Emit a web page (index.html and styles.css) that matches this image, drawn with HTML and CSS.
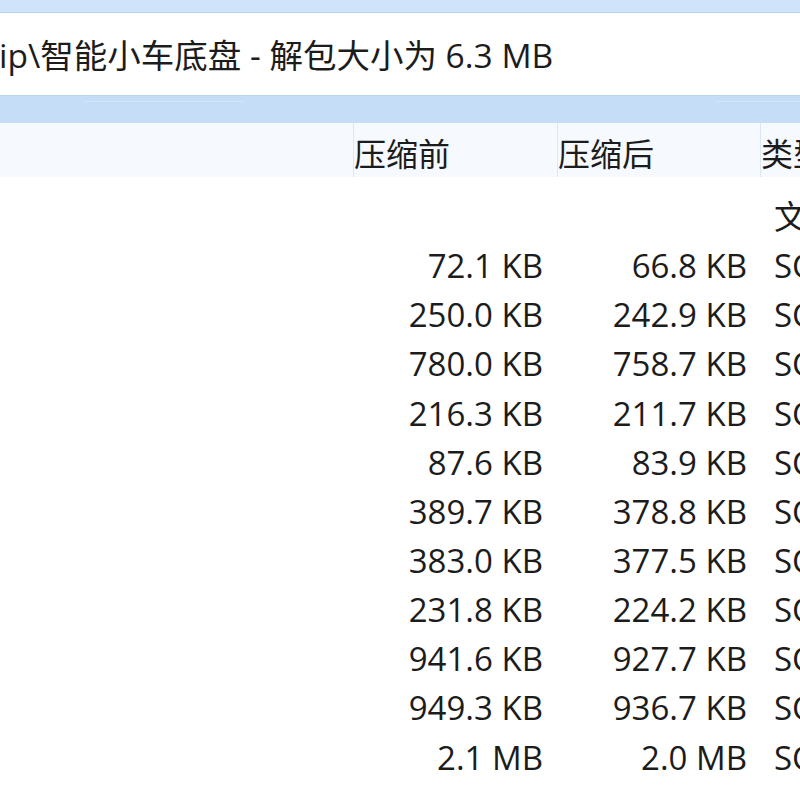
FILE: index.html
```html
<!DOCTYPE html>
<html lang="zh-CN">
<head>
<meta charset="utf-8">
<title>智能小车底盘</title>
<link rel="stylesheet" href="styles.css">
</head>
<body>
<div class="window">
  <div class="strip"></div>
  <div class="title">ip\智能小车底盘 - 解包大小为 6.3 MB</div>
  <div class="toolbar">
    <span class="glint glint-a"></span>
    <span class="glint glint-b"></span>
  </div>
  <div class="list">
    <div class="head grid">
      <div class="hcell"></div>
      <div class="hcell sep">压缩前</div>
      <div class="hcell sep">压缩后</div>
      <div class="hcell sep">类型</div>
    </div>
    <div class="rows">
      <div class="row grid"><div></div><div class="num"></div><div class="num"></div><div class="type">文件夹</div></div>
      <div class="row grid"><div></div><div class="num">72.1 KB</div><div class="num">66.8 KB</div><div class="type">SCHDOC 文件</div></div>
      <div class="row grid"><div></div><div class="num">250.0 KB</div><div class="num">242.9 KB</div><div class="type">SCHDOC 文件</div></div>
      <div class="row grid"><div></div><div class="num">780.0 KB</div><div class="num">758.7 KB</div><div class="type">SCHDOC 文件</div></div>
      <div class="row grid"><div></div><div class="num">216.3 KB</div><div class="num">211.7 KB</div><div class="type">SCHDOC 文件</div></div>
      <div class="row grid"><div></div><div class="num">87.6 KB</div><div class="num">83.9 KB</div><div class="type">SCHDOC 文件</div></div>
      <div class="row grid"><div></div><div class="num">389.7 KB</div><div class="num">378.8 KB</div><div class="type">SCHDOC 文件</div></div>
      <div class="row grid"><div></div><div class="num">383.0 KB</div><div class="num">377.5 KB</div><div class="type">SCHDOC 文件</div></div>
      <div class="row grid"><div></div><div class="num">231.8 KB</div><div class="num">224.2 KB</div><div class="type">SCHDOC 文件</div></div>
      <div class="row grid"><div></div><div class="num">941.6 KB</div><div class="num">927.7 KB</div><div class="type">SCHDOC 文件</div></div>
      <div class="row grid"><div></div><div class="num">949.3 KB</div><div class="num">936.7 KB</div><div class="type">SCHDOC 文件</div></div>
      <div class="row grid"><div></div><div class="num">2.1 MB</div><div class="num">2.0 MB</div><div class="type">SCHDOC 文件</div></div>
    </div>
  </div>
</div>
</body>
</html>
```

FILE: styles.css
```css
html, body {
  margin: 0;
  padding: 0;
  background: #ffffff;
}

body {
  width: 800px;
  height: 800px;
  overflow: hidden;
  font-family: "Open Sans", "Noto Sans CJK SC", sans-serif;
  font-size: 33px;
  color: #1c1c1c;
}

.window {
  width: 800px;
  height: 800px;
  overflow: hidden;
  display: flex;
  flex-direction: column;
}

.strip {
  height: 12px;
  flex: none;
  background: #cfe4fa;
  border-bottom: 1px solid #b9d3ee;
}

.title {
  height: 82px;
  flex: none;
  line-height: 84px;
  margin-left: -1px;
  font-size: 33.5px;
  white-space: nowrap;
  overflow: hidden;
  background: #ffffff;
}

.toolbar {
  flex: none;
  background: #c5ddf7;
  border-top: 1px solid #b8d2ef;
  display: flex;
  align-items: flex-start;
  padding-top: 5px;
  box-sizing: border-box;
  height: 28px;
}

.glint {
  display: block;
  height: 1px;
  background: #d6e7fa;
}

.glint-a {
  margin-left: 85px;
  width: 158px;
}

.glint-b {
  margin-left: auto;
  width: 83px;
}

.list {
  flex: 1;
  display: flex;
  flex-direction: column;
}

.grid {
  display: grid;
  grid-template-columns: 353px 204px 203px 200px;
  white-space: nowrap;
}

.head {
  height: 54px;
  background: #f6f9fe;
  font-size: 32px;
}

.hcell {
  line-height: 54px;
  padding-top: 4px;
  box-sizing: border-box;
  overflow: hidden;
}

.hcell.sep {
  border-left: 1px solid #dce7f3;
}

.rows {
  padding-top: 15px;
}

.row {
  height: 49.15px;
  line-height: 49px;
}

.num {
  text-align: right;
  padding-right: 14px;
}

.num + .num {
  padding-right: 13px;
}

.type {
  padding-left: 14px;
  overflow: hidden;
}
```
